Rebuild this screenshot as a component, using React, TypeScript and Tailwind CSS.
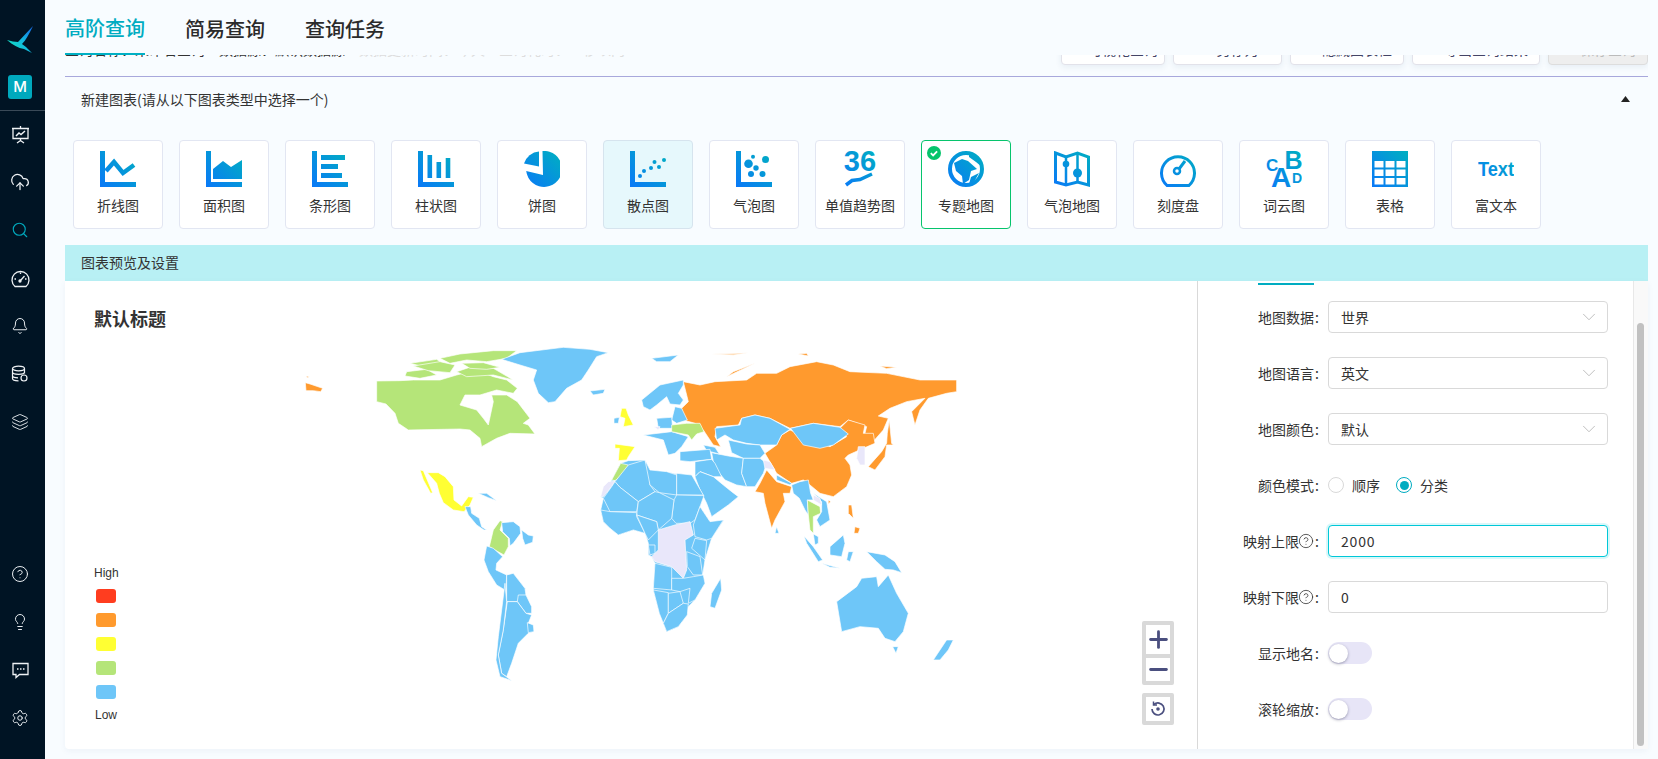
import { useId, type ReactNode } from 'react'
import {
  Bell,
  ChevronDown,
  CircleHelp,
  CloudUpload,
  Layers,
  Lightbulb,
  Minus,
  Plus,
  Search,
  Settings,
} from 'lucide-react'

const BLUE = '#6ec6f8'
const ORANGE = '#ff9a2e'
const YELLOW = '#ffff33'
const GREEN = '#b5e579'
const LILAC = '#e9e7fa'

// traced from the reference, west half
const westShapes: [string, string][] = [
  [ORANGE, '76,158 90,162 128,175 122,185 100,182 78,182'],
  [ORANGE, '78,138 88,140 82,143'],
  [GREEN, '290,153 360,152 400,150 480,150 530,135 570,125 600,125 640,140 680,150 712,175 700,190 650,180 600,195 555,195 540,225 590,240 610,265 625,285 640,215 635,195 680,195 712,215 750,265 730,280 745,285 765,312 690,310 650,325 605,350 600,325 570,300 540,297 385,300 355,280 345,250 318,222 290,215'],
  [GREEN, '380,125 440,118 470,135 420,145 375,138'],
  [GREEN, '390,100 470,88 500,110 450,115'],
  [GREEN, '400,108 480,95 525,105 510,128 445,122'],
  [GREEN, '480,85 540,72 640,62 710,62 680,85 620,95 560,90 510,100'],
  [GREEN, '530,125 590,105 640,115 700,150 640,135 560,140'],
  [GREEN, '545,100 610,98 660,112 620,118 570,115'],
  [BLUE, '665,88 720,68 850,52 930,58 985,68 950,80 925,120 905,150 860,175 825,215 805,218 775,190 760,150 770,120 720,105'],
  [BLUE, '930,183 975,178 970,190 940,195'],
  [BLUE, '1115,85 1195,75 1170,95 1130,95'],
  [YELLOW, '420,420 430,422 458,488 452,490 430,450'],
  [YELLOW, '442,428 475,428 495,440 520,470 522,510 545,528 565,500 580,502 570,525 552,545 520,540 490,518 478,490 470,460'],
  [BLUE, '555,530 572,530 575,550 598,565 605,590 620,600 612,600 590,585 565,555'],
  [BLUE, '595,490 620,490 650,512 625,503'],
  [GREEN, '640,600 660,572 668,575 660,600 685,625 685,650 672,675 645,660 628,650'],
  [BLUE, '665,578 700,575 720,590 722,610 700,640 690,648 688,625 668,605'],
  [BLUE, '725,600 745,615 760,618 758,637 735,645 728,625'],
  [BLUE, '620,648 640,655 668,680 650,700 648,720 680,735 678,782 650,765 625,725 612,690'],
  [BLUE, '680,735 700,730 735,775 738,795 715,815 680,815'],
  [BLUE, '715,795 738,795 755,830 755,850 738,850 712,815'],
  [BLUE, '682,815 712,815 738,850 755,855 745,880 762,895 745,910 715,940 695,1000 680,1040 665,1030 655,975 670,900'],
  [BLUE, '675,760 680,815 670,900 655,975 665,1030 695,1052 660,1040 648,990 655,920'],
  [BLUE, '742,878 760,885 762,905 745,908'],
]

// east half, different crop origin
const eastShapes: [string, string][] = [
  ['#ffd9b0', '335,72 445,68 400,76'],
  [ORANGE, '250,155 300,165 345,155 440,150 470,130 530,130 570,110 650,95 700,105 750,125 860,130 960,150 1070,150 1070,185 1040,190 985,205 960,240 945,285 935,245 975,205 920,215 870,235 835,258 865,265 850,300 815,340 790,330 800,290 745,270 720,290 640,280 570,295 510,265 465,255 425,265 415,285 350,290 345,320 362,350 340,345 310,300 285,280 250,270 245,235 265,215'],
  [ORANGE, '380,140 465,100 400,125'],
  [ORANGE, '595,72 620,70 625,78'],
  [ORANGE, '840,108 890,112 860,116'],
  [ORANGE, '570,300 640,330 690,350 740,320 720,295 745,270 795,285 790,310 820,310 825,340 790,355 745,375 735,385 750,405 755,435 740,470 700,500 660,490 630,465 610,450 575,460 530,430 495,370 530,345 545,315'],
  [BLUE, '345,295 420,285 425,265 465,255 510,265 570,298 545,315 530,345 480,345 440,340 400,330 375,315 350,330'],
  [BLUE, '572,295 640,280 720,292 745,312 700,345 660,355 610,345'],
  [BLUE, '385,330 440,342 480,345 495,370 480,385 430,385 395,368'],
  [BLUE, '335,368 385,378 430,385 425,430 440,470 410,465 375,450 350,420 340,395'],
  [BLUE, '310,345 345,352 358,372 320,362'],
  [BLUE, '240,365 330,358 335,388 270,395 240,392'],
  [BLUE, '430,385 480,385 500,400 490,430 465,470 440,470 425,430'],
  [BLUE, '285,395 335,388 345,400 365,440 340,440 300,425 285,440'],
  [BLUE, '285,440 300,425 340,440 370,465 395,485 415,500 385,525 335,560 320,520 300,480'],
  [LILAC, '490,390 510,395 525,420 495,415'],
  [ORANGE, '500,420 530,455 575,470 570,490 550,490 555,515 525,570 515,595 495,520 490,490 465,485 480,460'],
  [BLUE, '530,435 575,460 570,465 530,450'],
  [BLUE, '575,465 600,455 625,450 632,490 640,510 622,510 625,555 615,540 598,505 580,490'],
  [BLUE, '640,490 680,515 690,570 660,590 650,570 665,545 665,515'],
  [GREEN, '622,510 660,530 662,550 640,560 640,610 630,600 625,555'],
  [LILAC, '640,495 660,505 665,525 640,510'],
  [ORANGE, '745,525 755,525 760,565 745,550'],
  [ORANGE, '765,590 780,595 775,610 762,610'],
  [ORANGE, '685,510 692,515 685,522'],
  [LILAC, '775,350 795,350 795,405 780,405 770,385'],
  [ORANGE, '868,270 875,340 880,345 860,345 855,380 825,420 805,410 845,365 860,340 862,310'],
  [BLUE, '530,590 537,610 525,610'],
  [BLUE, '640,612 655,620 655,640 645,645'],
  [BLUE, '612,618 640,650 668,690 655,695 620,640'],
  [BLUE, '690,650 730,615 735,640 725,680 690,675'],
  [BLUE, '665,700 720,715 690,712'],
  [BLUE, '745,665 760,665 750,695 740,690'],
  [BLUE, '800,665 855,675 885,695 905,728 880,720 855,718 830,695'],
  [BLUE, '710,815 770,770 785,745 830,740 835,770 865,735 890,790 925,850 910,905 885,935 855,925 835,895 780,890 725,905'],
  [BLUE, '878,950 895,950 888,970'],
  [BLUE, '1040,930 1060,930 1045,960 1020,990 1000,990'],
  [YELLOW, '45,342 105,350 85,380 80,390 55,392 58,355 45,355'],
  [YELLOW, '65,235 78,235 85,255 100,285 70,290 75,265 60,260'],
  [BLUE, '42,265 58,262 55,280 42,280'],
  [BLUE, '125,210 180,165 250,150 250,165 235,190 250,210 240,225 210,222 200,200 170,225 150,240 130,230'],
  [BLUE, '225,230 245,235 262,270 230,280 215,270'],
  [BLUE, '170,265 215,262 218,295 175,295'],
  [BLUE, '130,315 215,305 265,320 245,350 225,370 205,375 190,330'],
  [GREEN, '215,285 260,280 300,280 312,305 290,312 275,330 265,315 215,305'],
  [LILAC, '162,290 180,290 175,300'],
  // whole of Africa first, countries on top so the lines show
  [BLUE, '35,450 62,400 85,392 135,390 150,420 200,425 230,432 275,435 310,497 300,530 330,575 372,570 335,625 315,690 308,735 315,760 285,810 265,830 235,890 200,905 190,880 178,850 160,780 165,700 155,680 145,675 145,640 135,610 100,600 55,615 30,595 10,575 2,540 10,505 2,500'],
  [GREEN, '62,400 85,405 75,430 45,452 35,450'],
  [LILAC, '25,455 45,452 35,470 10,500 2,500 10,470'],
  [BLUE, '85,405 135,390 150,420 150,465 165,485 115,515 60,472 45,455'],
  [BLUE, '45,455 60,472 115,515 110,545 30,545 10,505 35,470'],
  [BLUE, '135,390 150,420 200,425 230,435 230,495 178,488 150,465'],
  [BLUE, '230,430 275,435 310,495 230,495'],
  [BLUE, '230,495 312,497 300,530 285,570 270,580 228,580 215,565 222,510'],
  [BLUE, '115,515 165,485 178,488 222,510 215,565 175,600 170,575 110,555'],
  [BLUE, '2,540 30,545 110,548 110,560 135,610 100,600 55,615 30,595 10,575'],
  [BLUE, '110,555 170,575 175,600 145,630 135,610'],
  [BLUE, '300,530 330,575 370,570 335,625 320,630 285,620 280,585'],
  [BLUE, '285,625 320,632 315,690 275,655'],
  [LILAC, '175,600 225,585 270,575 280,615 255,630 260,720 250,745 215,710 165,695 155,680 175,660'],
  [BLUE, '145,645 165,645 165,670 150,675'],
  [BLUE, '260,665 300,680 308,735 280,735 262,710'],
  [BLUE, '165,700 215,712 215,780 160,775'],
  [BLUE, '215,745 250,745 280,740 310,735 315,760 285,810 265,820 270,775 240,785 215,780'],
  [BLUE, '160,780 205,788 205,850 190,880 178,850'],
  [BLUE, '205,790 240,785 250,820 205,850'],
  [BLUE, '205,850 250,820 265,822 262,855 235,890 200,905 190,880'],
  [BLUE, '362,745 365,780 345,835 330,830 335,790'],
]

function WorldMap() {
  return (
    <svg className="absolute inset-0" width="1132" height="468" viewBox="65 281 1132 468">
      <g transform="translate(280 330) scale(0.3333)" stroke="#ffffff" strokeWidth="2" strokeLinejoin="round">
        {westShapes.map(([fill, points], i) => (
          <polygon key={i} fill={fill} points={points} />
        ))}
      </g>
      <g transform="translate(600 330) scale(0.3333)" stroke="#ffffff" strokeWidth="2" strokeLinejoin="round">
        {eastShapes.map(([fill, points], i) => (
          <polygon key={i} fill={fill} points={points} />
        ))}
      </g>
    </svg>
  )
}

function GradientIcon({ children }: { children: (fill: string) => ReactNode }) {
  const id = useId()
  return (
    <svg width="36" height="36" viewBox="0 0 36 36" fontFamily="'Liberation Sans', sans-serif" fontWeight="700">
      <defs>
        <linearGradient id={id} gradientUnits="userSpaceOnUse" x1="0" y1="36" x2="36" y2="0">
          <stop offset="0" stopColor="#0a78f8" />
          <stop offset="1" stopColor="#00b0c0" />
        </linearGradient>
      </defs>
      {children(`url(#${id})`)}
    </svg>
  )
}

const AXIS = 'M0 0h5v31h31v5H0z'

const chartTypes: { label: string; icon: (f: string) => ReactNode; hover?: boolean; checked?: boolean }[] = [
  {
    label: '折线图',
    icon: (f) => (
      <>
        <path d={AXIS} fill={f} />
        <path d="M6 20l8-9 9 11 11-8" fill="none" stroke={f} strokeWidth="4.5" />
      </>
    ),
  },
  {
    label: '面积图',
    icon: (f) => (
      <>
        <path d={AXIS} fill={f} />
        <path d="M7 28V18l10-8 8 6 11-7v19z" fill={f} />
      </>
    ),
  },
  {
    label: '条形图',
    icon: (f) => (
      <>
        <path d={AXIS} fill={f} />
        <path d="M9 4h24v5H9zM9 13h17v5H9zM9 22h21v5H9z" fill={f} />
      </>
    ),
  },
  {
    label: '柱状图',
    icon: (f) => (
      <>
        <path d={AXIS} fill={f} />
        <path d="M9.5 4h4.6v23H9.500zM18.500 11h4.600v16h-4.600zM27.700 7h4.600v20h-4.600z" fill={f} />
      </>
    ),
  },
  {
    label: '饼图',
    icon: (f) => (
      <>
        <path d="M15 0.500V15.500L0 12.500A17 17 0 0 1 15 0.500z" fill={f} />
        <path d="M18.500 0A18 18 0 1 1 2.200 20L19 24z" fill={f} />
      </>
    ),
  },
  {
    label: '散点图',
    hover: true,
    icon: (f) => (
      <>
        <path d={AXIS} fill={f} />
        <g fill={f}>
          <circle cx="10" cy="25" r="2" />
          <circle cx="14" cy="20" r="2" />
          <circle cx="21" cy="17" r="2" />
          <circle cx="24.500" cy="11" r="2" />
          <circle cx="29" cy="16" r="2" />
          <circle cx="34" cy="9" r="2" />
        </g>
      </>
    ),
  },
  {
    label: '气泡图',
    icon: (f) => (
      <>
        <path d={AXIS} fill={f} />
        <g fill={f}>
          <circle cx="12.500" cy="12.700" r="4.300" />
          <circle cx="20" cy="17" r="2.700" />
          <circle cx="15" cy="23" r="3" />
          <circle cx="26.500" cy="23" r="3" />
          <circle cx="29.500" cy="8.500" r="3.500" />
          <circle cx="17" cy="5.700" r="2" />
        </g>
      </>
    ),
  },
  {
    label: '单值趋势图',
    icon: (f) => (
      <>
        <text x="18" y="20" textAnchor="middle" fontSize="29" fill={f}>36</text>
        <path d="M4 34l6-4.500 8-1 12-5.500" fill="none" stroke={f} strokeWidth="3.500" />
      </>
    ),
  },
  {
    label: '专题地图',
    checked: true,
    icon: (f) => (
      <>
        <circle cx="18" cy="18" r="16" fill="none" stroke={f} strokeWidth="4" />
        <path d="M6 12l8-4 6 2 9 8-6 2-2 9-6 4-1-8-6-5z" fill={f} />
        <path d="M21 2l9 4 4 10-6-5-7-5zM23 26l8-4-5 9-5 2z" fill={f} />
      </>
    ),
  },
  {
    label: '气泡地图',
    icon: (f) => (
      <>
        <path d="M1.500 2L12 6l11.500-4L34.500 6v28L23.500 31 12 34 1.500 31z" fill="none" stroke={f} strokeWidth="3" strokeLinejoin="miter" />
        <path d="M12 6v28M23.500 3v28" stroke={f} strokeWidth="2.500" />
        <circle cx="12" cy="13" r="3.300" fill={f} />
        <circle cx="23.500" cy="22" r="4.500" fill={f} />
      </>
    ),
  },
  {
    label: '刻度盘',
    icon: (f) => (
      <>
        <path d="M7 34.500A16.500 16.500 0 1 1 29 34.500z" fill="none" stroke={f} strokeWidth="3" />
        <circle cx="17" cy="20" r="3" fill="none" stroke={f} strokeWidth="2.500" />
        <path d="M19 18l6-8" stroke={f} strokeWidth="3" />
      </>
    ),
  },
  {
    label: '词云图',
    icon: (f) => (
      <>
        <text x="0" y="20" fontSize="17" fill={f}>C</text>
        <text x="18.500" y="18" fontSize="25" fill={f}>B</text>
        <text x="5" y="36" fontSize="28" fill={f}>A</text>
        <text x="26" y="32" fontSize="14" fill={f}>D</text>
      </>
    ),
  },
  {
    label: '表格',
    icon: (f) => (
      <path
        fillRule="evenodd"
        d="M0 0h36v36H0zM2.500 10v6.500h9V10zM13.500 10v6.500h9V10zM24.500 10v6.500h9V10zM2.500 18.500v6.500h9v-6.500zM13.500 18.500v6.500h9v-6.500zM24.500 18.500v6.500h9v-6.500zM2.500 27v6.500h9V27zM13.500 27v6.500h9V27zM24.500 27v6.500h9V27z"
        fill={f}
      />
    ),
  },
  {
    label: '富文本',
    icon: (f) => (
      <text x="0" y="25" fontSize="20" textLength="36" lengthAdjust="spacingAndGlyphs" fill={f}>Text</text>
    ),
  },
]

function ChartCard({ item }: { item: (typeof chartTypes)[number] }) {
  return (
    <div
      className={`relative flex h-[89px] w-[90px] shrink-0 flex-col items-center rounded-[4px] border pt-[10px] ${
        item.checked
          ? 'border-[#06c46c] bg-white'
          : item.hover
            ? 'border-[#d6e4ee] bg-[#e6f8fc]'
            : 'border-[#e2e6f2] bg-white'
      }`}
    >
      {item.checked && (
        <svg className="absolute left-[5px] top-[5px]" width="14" height="14" viewBox="0 0 14 14">
          <circle cx="7" cy="7" r="7" fill="#06c46c" />
          <path d="M3.800 7.200l2.300 2.200 4-4" fill="none" stroke="#ffffff" strokeWidth="1.800" />
        </svg>
      )}
      <GradientIcon>{item.icon}</GradientIcon>
      <span className="mt-[8px] whitespace-nowrap text-[14px] leading-[20px] text-[#333333]">{item.label}</span>
    </div>
  )
}

function SideIcon({ children, active }: { children: ReactNode; active?: boolean }) {
  return <div className={`flex h-[20px] w-[20px] items-center justify-center ${active ? 'text-[#00a9bd]' : 'text-[#eef2f5]'}`}>{children}</div>
}

function FormRow({ label, help, children }: { label: string; help?: boolean; children: ReactNode }) {
  return (
    <div className="flex h-8 items-center">
      <div className="flex w-[122px] items-center justify-end text-[14px] text-[#333333]">
        {label}
        {help && <CircleHelp size={16} strokeWidth={1.200} className="-ml-[1px] shrink-0" />}
        <span className="ml-[1px] mr-[1px]">:</span>
      </div>
      <div className="ml-[8px] w-[280px]">{children}</div>
    </div>
  )
}

function SelectBox({ value }: { value: string }) {
  return (
    <div className="flex h-8 items-center justify-between rounded-[4px] border border-[#d9d9d9] bg-white pl-[12px] pr-[7px] text-[14px] text-[#333333]">
      {value}
      <ChevronDown size={22} strokeWidth={0.800} className="text-[#a8a8a8]" />
    </div>
  )
}

function Toggle() {
  return (
    <div className="flex h-[22px] w-[44px] items-center rounded-full bg-[#e7e5f7] pl-[1px]">
      <div className="h-[19px] w-[19px] rounded-full bg-white shadow-[0_1px_3px_rgba(60,60,90,0.45)]" />
    </div>
  )
}

function TopButton({ label, width, disabled }: { label: string; width: string; disabled?: boolean }) {
  return (
    <div
      className={`flex h-8 items-center justify-center gap-2 rounded-[4px] border text-[14px] shadow-[0_2px_6px_rgba(30,60,120,0.08)] ${width} ${
        disabled ? 'border-[#dddddd] bg-[#eeeeee] text-[#bbbbbb]' : 'border-[#e2e2ea] bg-white text-[#444466]'
      }`}
    >
      <span className={`h-[10px] w-[12px] border-b-2 ${disabled ? 'border-[#bbbbbb]' : 'border-[#555577]'}`} />
      {label}
    </div>
  )
}

const legend = ['#ff3d1f', ORANGE, YELLOW, GREEN, BLUE]

export default function App() {
  return (
    <div className="flex h-[759px] w-[1658px] overflow-hidden bg-[#f8fcff] font-['Noto_Sans_CJK_SC','Noto_Sans',sans-serif]">
      <aside className="flex w-[45px] shrink-0 flex-col bg-[#001424]">
        <div className="flex h-[75px] items-center pl-[7px] pt-[3px]">
          <svg width="27" height="27" viewBox="0 0 27 27">
            <defs>
              <linearGradient id="bird" x1="0" y1="0.7" x2="1" y2="0">
                <stop offset="0" stopColor="#12e0c0" />
                <stop offset="0.5" stopColor="#12b8e0" />
                <stop offset="1" stopColor="#1666ee" />
              </linearGradient>
            </defs>
            <path d="M26 0C22 8 19 14 15 18l4 3 6 6-8-4C11 22 6 19 0 14c4 1 8 2 11 2C16 11 21 5 26 0z" fill="url(#bird)" />
          </svg>
        </div>
        <div className="ml-[8px] flex h-[24px] w-[24px] items-center justify-center rounded-[3px] bg-[#00a9bd] font-['Inter',sans-serif] text-[15px] font-medium text-white">M</div>
        <div className="mt-[11px] border-b border-[#3a4a58]" />
        <div className="mt-[13px] flex flex-col gap-[28px] pl-[10px]">
          <SideIcon>
            <svg width="19" height="19" viewBox="0 0 19 19" fill="none" stroke="currentColor" strokeWidth="1.300">
              <path d="M2 3.500h15v10H2zM1 3.500h17M9.500 1v2.500M9.500 13.500v2M6 18l3.500-2.500L13 18" />
              <path d="M5 11l3-3 2 1.500L14 6" strokeWidth="1.500" />
            </svg>
          </SideIcon>
          <SideIcon><CloudUpload size={20} strokeWidth={1.500} /></SideIcon>
          <SideIcon active><Search size={18} strokeWidth={1.500} /></SideIcon>
          <SideIcon>
            <svg width="19" height="19" viewBox="0 0 19 19" fill="none" stroke="currentColor" strokeWidth="1.300">
              <path d="M4 17.500A8.500 8.500 0 1 1 15 17.500z" />
              <path d="M9.500 11.500l4-4.500M9.500 3.500v1.500M3.500 10H5M15.500 10H14" />
              <circle cx="9" cy="12" r="1" fill="currentColor" />
            </svg>
          </SideIcon>
          <SideIcon><Bell size={18} strokeWidth={1.300} /></SideIcon>
          <SideIcon>
            <svg width="18" height="18" viewBox="0 0 18 18" fill="none" stroke="currentColor" strokeWidth="1.200">
              <ellipse cx="7.500" cy="3.500" rx="6" ry="2.300" />
              <path d="M1.500 3.500v10c0 1.300 2.700 2.300 6 2.300M13.500 3.500v5M1.500 7c0 1.300 2.700 2.300 6 2.300s6-1 6-2.300M1.500 10.500c0 1.300 2.700 2.300 5.500 2.300" />
              <circle cx="13" cy="13" r="3" />
            </svg>
          </SideIcon>
          <SideIcon><Layers size={18} strokeWidth={1.200} /></SideIcon>
        </div>
        <div className="mt-auto mb-[31px] flex flex-col gap-[28px] pl-[10px]">
          <SideIcon><CircleHelp size={18} strokeWidth={1.300} /></SideIcon>
          <SideIcon><Lightbulb size={18} strokeWidth={1.300} /></SideIcon>
          <SideIcon>
            <svg width="17" height="17" viewBox="0 0 17 17" fill="none" stroke="currentColor" strokeWidth="1.300">
              <path d="M1 1.500h15v11H7.500L4 15.500v-3H1z" />
              <path d="M5 7h1.500M8 7h1.500M11 7h1.500" strokeWidth="1.600" />
            </svg>
          </SideIcon>
          <SideIcon><Settings size={18} strokeWidth={1.300} /></SideIcon>
        </div>
      </aside>

      <main className="flex min-w-0 flex-1 flex-col pl-[20px] pr-[10px]">
        <nav className="flex h-[55px] shrink-0 gap-[40px] text-[20px] font-medium leading-none text-[#2b2b2b]">
          <div className="flex items-center border-b-2 border-[#00b0c4] pt-[3px] text-[#00acc1]">高阶查询</div>
          <div className="flex items-center pt-[3px]">简易查询</div>
          <div className="flex items-center pt-[3px]">查询任务</div>
        </nav>

        {/* toolbar scrolled under the tabs, only its bottom edge shows */}
        <div className="box-content h-[21px] shrink-0 overflow-hidden border-b border-[#a8a8dc]">
          <div className="-mt-[22px] flex h-8 items-center justify-between">
            <span className="whitespace-nowrap text-[14px] text-[#333333]">
              查询名称：未命名查询　数据源：默认数据源
              <span className="text-[#dddddd]">　数据更新时间：今天　查询耗时：一秒以内</span>
            </span>
            <div className="flex gap-2">
              <TopButton label="可视化查询" width="w-[104px]" />
              <TopButton label="另存为" width="w-[109px]" />
              <TopButton label="隐藏图表栏" width="w-[114px]" />
              <TopButton label="导出查询结果" width="w-[128px]" />
              <TopButton label="保存查询" width="w-[100px]" disabled />
            </div>
          </div>
        </div>

        <div className="flex h-[46px] shrink-0 items-center justify-between pb-[2px] pl-[16px] pr-[18px] text-[14px] text-[#333333]">
          新建图表(请从以下图表类型中选择一个)
          <svg width="9" height="6" viewBox="0 0 9 6"><path d="M4.500 0L9 6H0z" fill="#222222" /></svg>
        </div>

        <div className="mt-[17px] flex shrink-0 gap-[16px] pl-[8px]">
          {chartTypes.map((item) => (
            <ChartCard key={item.label} item={item} />
          ))}
        </div>

        <div className="mt-[16px] flex h-[36px] shrink-0 items-center bg-[#b8f0f4] pb-[2px] pl-[16px] text-[14px] text-[#333333]">图表预览及设置</div>

        <section className="flex h-[468px] shrink-0 rounded-b-[4px] bg-white shadow-[0_2px_6px_rgba(30,60,120,0.05)]">
          <div className="relative w-[1133px] shrink-0 border-r border-[#d9d9d9]">
            <WorldMap />
            <h2 className="relative pl-[29px] pt-[25px] text-[18px] font-semibold leading-6 text-[#333333]">默认标题</h2>

            <div className="absolute left-[29px] top-[284px] flex flex-col font-['Liberation_Sans',sans-serif] text-[12px] leading-4 text-[#333333]">
              <span>High</span>
              <div className="mt-[8px] flex flex-col gap-[10px] pl-[2px]">
                {legend.map((color) => (
                  <span key={color} className="h-[14px] w-[20px] rounded-[3px]" style={{ backgroundColor: color }} />
                ))}
              </div>
              <span className="mt-[8px] pl-[1px]">Low</span>
            </div>

            <div className="absolute bottom-[24px] right-[23px] flex w-[32px] flex-col gap-[8px]">
              <div className="flex h-[64px] flex-col rounded-[2px] border-4 border-[#d9d9d9] bg-white text-[#4a4f7f]">
                <div className="flex h-[31px] items-center justify-center border-b-2 border-[#d9d9d9]"><Plus size={27} strokeWidth={2.500} className="shrink-0" /></div>
                <div className="flex min-h-0 flex-1 items-center justify-center border-t-2 border-[#d9d9d9]"><Minus size={27} strokeWidth={2.500} className="shrink-0" /></div>
              </div>
              <div className="flex h-[32px] items-center justify-center rounded-[2px] border-4 border-[#d9d9d9] bg-white">
                <svg width="16" height="16" viewBox="0 0 16 16" fill="none" stroke="#4a4f7f" strokeWidth="1.700">
                  <path d="M4 3.500A6 6 0 1 1 2 8" />
                  <path d="M3.500 0.500v3.500h3.500" strokeWidth="1.500" />
                  <circle cx="8" cy="8" r="1.800" fill="#4a4f7f" stroke="none" />
                </svg>
              </div>
            </div>
          </div>

          <div className="flex min-w-0 flex-1">
            <div className="min-w-0 flex-1">
              <div className="ml-[60px] mt-[2px] h-[2px] w-[56px] bg-[#00acc1]" />
              <div className="mt-[16px] flex flex-col gap-6">
                <FormRow label="地图数据"><SelectBox value="世界" /></FormRow>
                <FormRow label="地图语言"><SelectBox value="英文" /></FormRow>
                <FormRow label="地图颜色"><SelectBox value="默认" /></FormRow>
                <FormRow label="颜色模式">
                  <div className="flex items-center text-[14px] text-[#333333]">
                    <span className="h-4 w-4 rounded-full border border-[#d9d9d9] bg-white" />
                    <span className="ml-[8px]">顺序</span>
                    <span className="ml-[16px] flex h-4 w-4 items-center justify-center rounded-full border border-[#00acc1]">
                      <span className="h-[9px] w-[9px] rounded-full bg-[#00acc1]" />
                    </span>
                    <span className="ml-[8px]">分类</span>
                  </div>
                </FormRow>
                <FormRow label="映射上限" help>
                  <div className="flex h-8 items-center rounded-[4px] border border-[#00c8d8] bg-white px-[12px] text-[14px] tracking-[0.06em] text-[#333333] shadow-[0_0_0_2px_rgba(0,200,216,0.15)]">2000</div>
                </FormRow>
                <FormRow label="映射下限" help>
                  <div className="flex h-8 items-center rounded-[4px] border border-[#d9d9d9] bg-white px-[12px] text-[14px] text-[#333333]">0</div>
                </FormRow>
                <FormRow label="显示地名"><Toggle /></FormRow>
                <FormRow label="滚轮缩放"><Toggle /></FormRow>
              </div>
            </div>
            <div className="w-[15px] shrink-0 border-l border-[#e8e8e8] bg-[#f9f9f9] pl-[3px] pt-[42px]">
              <div className="h-[423px] w-[7px] rounded-full bg-[#c1c1c1]" />
            </div>
          </div>
        </section>
      </main>
    </div>
  )
}
